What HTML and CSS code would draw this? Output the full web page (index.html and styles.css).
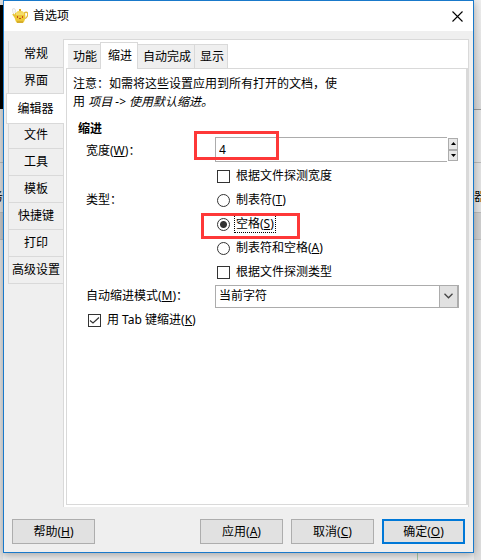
FILE: index.html
```
<!DOCTYPE html>
<html lang="zh-CN">
<head>
  <meta charset="UTF-8">
  <meta name="viewport" content="width=device-width, initial-scale=1.0">
  <title>首选项</title>
  <link rel="stylesheet" href="styles.css">
</head>
<body>
<!--后面的窗口-->
<div class="behind" aria-hidden="true">
  <div class="strip strip-left"><span>务</span></div>
  <div class="strip strip-right"><span>器</span></div>
  <div class="ruler"></div>
</div>

<main class="dialog">
  <header class="titlebar">
    <svg class="logo" width="16" height="16" viewBox="0 0 16 16">
      <path d="M.5 1 C3 0 4 2 3 4 L4 6" fill="none" stroke="#d8d8d8"/>
      <path d="M.5 1 L1 5 L3 7" fill="none" stroke="#e2e2e2"/>
      <path d="M12 5 C17 2 17 9 12 11" fill="none" stroke="#e3b93a" stroke-width="1.3"/>
      <path d="M1 6 L4 10" stroke="#e6c43c" stroke-width="2"/>
      <path d="M3 5 H13 C14 9 13 13 11 15 H5 C3 13 2 9 3 5Z" fill="#ecc735"/>
      <path d="M4 5 C5 2 11 2 12 5Z" fill="#f3d95a"/>
      <path d="M7 1 h2 v2 h-2 z" fill="#d9a61e"/>
      <path d="M4 6 H12" stroke="#fff2a0"/>
      <path d="M5 8 h1 v2 h-1 z M10 8 h1 v2 h-1 z M7 10 h2 v1 h-2 z" fill="#c8501f"/>
      <path d="M5 14 H11" stroke="#c09424"/>
    </svg>
    <h1>首选项</h1>
    <button type="button" class="close" aria-label="关闭">
      <svg width="11" height="11" viewBox="0 0 11 11"><path d="M.5 .5 L10.5 10.5 M10.5 .5 L.5 10.5" stroke="#000" stroke-width="1.1"/></svg>
    </button>
  </header>

  <div class="content">
    <nav class="side">
      <button type="button">常规</button>
      <button type="button">界面</button>
      <button type="button" class="active">编辑器</button>
      <button type="button">文件</button>
      <button type="button">工具</button>
      <button type="button">模板</button>
      <button type="button">快捷键</button>
      <button type="button">打印</button>
      <button type="button">高级设置</button>
    </nav>

    <section class="panel">
      <div class="tabs">
        <button type="button">功能</button>
        <button type="button" class="active">缩进</button>
        <button type="button">自动完成</button>
        <button type="button">显示</button>
      </div>
      <form class="page" id="prefs">
        <p class="note">注意：如需将这些设置应用到所有打开的文档，使用 <em>项目 -&gt; 使用默认缩进。</em></p>
        <h2>缩进</h2>
        <div class="fields">
          <label for="width">宽度(<u>W</u>)：</label>
          <div class="spin">
            <input type="text" id="width" value="4">
            <div class="arrows">
              <button type="button" aria-label="增加"><svg width="5" height="3"><path d="M0 3 L2.5 0 L5 3Z"/></svg></button>
              <button type="button" aria-label="减少"><svg width="5" height="3"><path d="M0 0 L2.5 3 L5 0Z"/></svg></button>
            </div>
            <i class="mark mark-width"></i>
          </div>
          <label class="option second"><input type="checkbox"><span>根据文件探测宽度</span></label>
          <span class="name">类型：</span>
          <label class="option"><input type="radio" name="type"><span>制表符(<u>T</u>)</span></label>
          <label class="option focused second"><input type="radio" name="type" checked><span>空格(<u>S</u>)</span><i class="mark mark-type"></i></label>
          <label class="option second"><input type="radio" name="type"><span>制表符和空格(<u>A</u>)</span></label>
          <label class="option second"><input type="checkbox"><span>根据文件探测类型</span></label>
          <label for="mode">自动缩进模式(<u>M</u>)：</label>
          <div class="combo">
            <select id="mode">
              <option>当前字符</option>
            </select>
            <span class="drop"><svg width="9" height="6" viewBox="0 0 9 6"><path d="M.5 .8 L4.5 4.8 L8.5 .8" fill="none" stroke="#444" stroke-width="1.3"/></svg></span>
          </div>
          <label class="option whole"><input type="checkbox" checked><span>用 Tab 键缩进(<u>K</u>)</span></label>
        </div>
      </form>
    </section>
  </div>

  <footer class="actions">
    <button type="button" class="help">帮助(<u>H</u>)</button>
    <button type="button">应用(<u>A</u>)</button>
    <button type="button">取消(<u>C</u>)</button>
    <button type="submit" form="prefs" class="primary">确定(<u>O</u>)</button>
  </footer>
</main>
</body>
</html>
```

FILE: styles.css
```
* {
  margin: 0;
  padding: 0;
  box-sizing: border-box;
}

body {
  min-height: 100vh;
  display: flex;
  padding: 0 7px 7px 3px;
  overflow: hidden;
  background: #ececec;
  color: #000;
  font: 12px/18px "Noto Sans", "Noto Sans CJK SC", sans-serif;
}

button, input, select {
  font: inherit;
  color: inherit;
}

u {
  text-underline-offset: 1px;
}

/*后面的窗口*/
.behind {
  position: absolute;
  top: 0;
  right: 0;
  bottom: 0;
  left: 0;
  overflow: hidden;
}

.strip {
  position: absolute;
  top: 0;
  bottom: 0;
  width: 7px;
  overflow: hidden;
}

.strip span {
  position: absolute;
  top: 188px;
}

.strip-left {
  left: 0;
  width: 3px;
  background: linear-gradient(#e4e4e4 5px, #000 5px, #000 109px, #dedede 109px, #dedede 162px, #bbb 162px, #bbb 163px, #dedede 163px, #dedede 212px, #bbb 212px, #bbb 213px, #c8c8c8 213px, #c8c8c8 239px, #bbb 239px, #bbb 240px, #e2e2e2 240px);
}

.strip-left span {
  right: 0;
}

.strip-right {
  right: 0;
  background: linear-gradient(#eee, #d8d8d8 109px, #999 109px, #999 110px, #e2e2e2 110px, #e2e2e2 162px, #bbb 162px, #bbb 163px, #e2e2e2 163px, #e2e2e2 212px, #bbb 212px, #bbb 213px, #cecece 213px, #cecece 239px, #bbb 239px, #bbb 240px, #dedede 240px);
}

.strip-right span {
  left: 0;
}

.ruler {
  position: absolute;
  right: 63px;
  bottom: 0;
  width: 1px;
  height: 8px;
  background: #a9c9a9;
}

.dialog {
  position: relative;
  flex: 1;
  display: flex;
  flex-direction: column;
  border: 1px solid #1979ca;
  background: #efefef;
  box-shadow: 0 2px 8px rgba(0, 0, 0, .3);
}

.titlebar {
  display: flex;
  align-items: center;
  height: 30px;
  padding: 0 10px 0 8px;
  background: #fff;
}

.titlebar h1 {
  flex: 1;
  margin-left: 5px;
  font-size: 12px;
  font-weight: normal;
}

.close {
  display: flex;
  border: 0;
  background: none;
}

.content {
  flex: 1;
  display: flex;
  padding: 8px 4px 0;
}

/*左侧标签*/
.side {
  width: 55px;
  display: flex;
  flex-direction: column;
  padding-top: 2px;
}

.side button {
  height: 27px;
  border: 1px solid #d9d9d9;
  border-width: 0 0 1px 1px;
  background: #efefef;
  white-space: nowrap;
}

.side button.active {
  position: relative;
  height: 31px;
  margin: -2px -1px -2px -2px;
  border-width: 1px 0 1px 1px;
  background: #fff;
}

.panel {
  flex: 1;
  min-width: 0;
  display: flex;
  flex-direction: column;
  padding: 2px 0 2px 2px;
  border: 1px solid #d9d9d9;
  border-width: 1px 1px 0 1px;
  background: #fff;
}

/*顶部标签*/
.tabs {
  display: flex;
  align-items: flex-end;
  padding-left: 2px;
}

.tabs button {
  height: 24px;
  padding: 0 3px 0 5px;
  border: 1px solid #d9d9d9;
  border-width: 1px 1px 0 0;
  background: #efefef;
}

.tabs button.active {
  position: relative;
  height: 27px;
  margin: 0 0 -1px -1px;
  padding: 0 5px 0 7px;
  border-left-width: 1px;
  background: #fff;
}

.page {
  flex: 1;
  padding: 6px 7px 7px 6px;
  border: 1px solid #d9d9d9;
  border-right-width: 2px;
}

.note {
  max-width: 272px;
}

.page h2 {
  margin-top: 10px;
  padding-left: 5px;
  font-size: 12px;
  line-height: 16px;
}

.fields {
  display: grid;
  grid-template-columns: 129px 1fr;
  grid-template-rows: 27px;
  grid-auto-rows: 24px;
  align-items: center;
  padding-left: 13px;
}

.spin {
  position: relative;
  display: flex;
  align-self: start;
  height: 25px;
}

.spin input {
  flex: 1;
  min-width: 0;
  padding-left: 3px;
  border: 1px solid #acacac;
  border-right: 0;
  background: #fff;
  outline: none;
}

.arrows {
  width: 12px;
  display: flex;
  flex-direction: column;
  padding: 1px;
}

.arrows button {
  flex: 1;
  display: flex;
  align-items: center;
  justify-content: center;
  border: 1px solid #acacac;
  background: #e8e8e8;
}

.option {
  display: flex;
  align-items: center;
}

.second {
  grid-column: 2;
}

.whole {
  grid-column: 1 / 3;
}

.option input {
  appearance: none;
  width: 13px;
  height: 13px;
  margin: 0 4px 0 2px;
  border: 1px solid #333;
  background: #fff;
}

.option input[type=radio] {
  border-radius: 50%;
}

.option input[type=radio]:checked {
  background: radial-gradient(circle, #333 3px, #fff 4px);
}

.option input[type=checkbox]:checked {
  background: url("data:image/svg+xml,%3Csvg xmlns='http://www.w3.org/2000/svg' viewBox='0 0 11 11'%3E%3Cpath d='M1 5.5L4 8L10 2.5' fill='none' stroke='%23333' stroke-width='1.2'/%3E%3C/svg%3E") #fff;
}

.option span {
  padding: 0 1px;
  border: 1px solid transparent;
  line-height: 16px;
}

.focused {
  position: relative;
}

.focused span {
  border: 1px dotted #000;
}

.combo {
  position: relative;
}

.combo select {
  appearance: none;
  display: block;
  width: 100%;
  height: 23px;
  padding-left: 3px;
  border: 1px solid #acacac;
  border-radius: 0;
  background: #fff;
}

.drop {
  position: absolute;
  top: 0;
  right: 0;
  width: 20px;
  height: 23px;
  display: flex;
  align-items: center;
  justify-content: center;
  border: 1px solid #acacac;
  border-right-width: 2px;
  background: #e1e1e1;
  pointer-events: none;
}

/*红框标注*/
.mark {
  position: absolute;
  border: 3px solid #fe3838;
}

.mark-width {
  top: -6px;
  left: -21px;
  width: 85px;
  height: 29px;
}

.mark-type {
  top: -2px;
  left: -14px;
  width: 99px;
  height: 26px;
}

.actions {
  display: flex;
  gap: 8px;
  padding: 12px 8px 8px;
}

.actions button {
  width: 83px;
  height: 25px;
  border: 1px solid #adadad;
  background: #e1e1e1;
}

.actions .help {
  margin-right: auto;
}

.actions .primary {
  border: 2px solid #0078d7;
}
```
